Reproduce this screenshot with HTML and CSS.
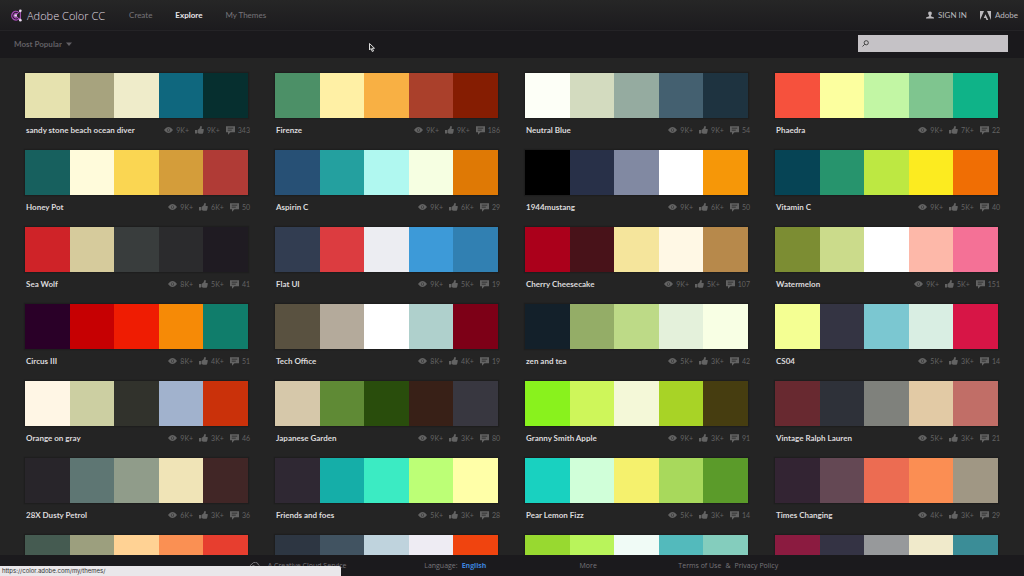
FILE: index.html
```html
<!DOCTYPE html>
<html lang="en">

<head>
    <meta charset="UTF-8">
    <meta name="viewport" content="width=device-width, initial-scale=1.0">
    <title>Explore - Adobe Color CC</title>
    <link rel="stylesheet" href="styles.css">
</head>

<body>
    <svg class="sprite" aria-hidden="true">
        <symbol id="eye" viewBox="0 0 18 12">
            <path fill-rule="evenodd" d="M0 6C3 2 6 0 9 0s6 2 9 6c-3 4-6 6-9 6S3 10 0 6zM9 3a3 3 0 1 0 0 6 3 3 0 0 0 0-6z"/>
            <circle cx="9" cy="6" r="2.3"/>
        </symbol>
        <symbol id="like" viewBox="0 0 18 16">
            <path d="M0 8h4v7H0zM5 8l4-3 2-5c2-.4 3 1 2.600 3L13 6h3.500c1.500 0 1.500 2 .5 2.500 1 .8.8 2-.3 2.300.7 1 .3 2-.7 2.200.5 1.200-.2 2.500-1.500 2.500H9l-4-1.500z"/>
        </symbol>
        <symbol id="comment" viewBox="0 0 18 17">
            <path fill-rule="evenodd" d="M0 0h18v12H9l-5 5v-5H0zM3.500 3v1.600h11V3zM3.500 6.800v1.600h8V6.800z"/>
        </symbol>
    </svg>

    <header class="top">
        <a class="logo" href="#">
            <svg viewBox="0 0 36 38" aria-hidden="true">
                <g fill="none" stroke="#a348b4" stroke-width="4">
                    <path d="M25 8.500A13 13 0 1 0 29 27"/>
                    <path d="M22 14a6.500 6.500 0 1 0 1 10"/>
                </g>
                <path d="M17 19L31 5M17 19l14 14M31 5v28" fill="none" stroke="#b65cc6" stroke-width="3"/>
                <g fill="#eadcf0">
                    <circle cx="31" cy="5" r="4"/>
                    <circle cx="17" cy="19" r="4"/>
                    <circle cx="31" cy="33" r="4"/>
                </g>
            </svg>
            <span>Adobe Color CC</span>
        </a>
        <nav class="menu">
            <a href="#">Create</a>
            <a href="#" class="active">Explore</a>
            <a href="#">My Themes</a>
        </nav>
        <div class="account">
            <a href="#">
                <svg class="user" viewBox="0 0 18 16" aria-hidden="true"><path d="M9 0c3 0 4.500 2 4 5-.3 2-1.200 3-2 4v2l7 2.500V16H0v-2.500L7 11V9C6.200 8 5.300 7 5 5 4.500 2 6 0 9 0z"/></svg>
                <span>SIGN IN</span>
            </a>
            <a href="#">
                <svg class="adobe" viewBox="0 0 22 18" aria-hidden="true"><path d="M0 0h8L0 18zM14 0h8v18zM11 6.500L16.500 18H13l-1.700-3.800H7.500z"/></svg>
                <span>Adobe</span>
            </a>
        </div>
    </header>

    <div class="toolbar">
        <label class="sort">
            <select aria-label="Sort themes">
                <option>Most Popular</option>
                <option>Most Used</option>
                <option>Random</option>
            </select>
            <svg viewBox="0 0 12 8" aria-hidden="true"><path d="M0 1h12L6 8z"/></svg>
        </label>
        <label class="search">
            <svg viewBox="0 0 14 14" aria-hidden="true"><circle cx="8.500" cy="5.500" r="4.200"/><path d="M5.500 8.500L1 13"/></svg>
            <input type="text" aria-label="Search themes">
        </label>
    </div>

    <main id="themes"></main>

    <footer class="bottom">
        <div>
            <svg class="cloud" viewBox="0 0 24 16" aria-hidden="true"><path d="M7 14a5 5 0 0 1-1-9.800A7 7 0 0 1 19 6a4.200 4.200 0 0 1-1 8zM6 9c2-3 5-2 6 0s4 3 6 0"/></svg>
            <a href="#">A Creative Cloud Service</a>
        </div>
        <div>Language: <a href="#" class="lang">English</a></div>
        <div><a href="#">More</a></div>
        <div class="legal"><a href="#">Terms of Use</a><span>&amp;</span><a href="#">Privacy Policy</a></div>
    </footer>

    <div class="status">https://color.adobe.com/my/themes/</div>
    <svg class="cursor" viewBox="0 0 12 18" aria-hidden="true"><path d="M1 1v13l3-3 2.500 6 2.500-1-2.500-5.500H11z"/></svg>

    <script>
        // colors, name, views, likes, comments
        const themes = [
            ['#e6e2af #a7a37e #efecca #0f677e #062f2f', 'sandy stone beach ocean diver', '9K+', '9K+', 343],
            ['#4c9067 #fff0a5 #f8b044 #aa402b #851d02', 'Firenze', '9K+', '9K+', 186],
            ['#fdfff7 #d3dbbf #95aba0 #446070 #1e3340', 'Neutral Blue', '9K+', '9K+', 54],
            ['#f6513d #fcff9f #c2f6a4 #7fc58f #0fb388', 'Phaedra', '9K+', '7K+', 22],
            ['#17605e #fffbdb #fad652 #d49d3a #b03b36', 'Honey Pot', '9K+', '6K+', 50],
            ['#275075 #24a09f #b0f8f0 #f6ffe2 #df7905', 'Aspirin C', '9K+', '6K+', 29],
            ['#000000 #283048 #8189a2 #ffffff #f69708', '1944mustang', '9K+', '6K+', 50],
            ['#064455 #27946d #bde842 #fceb20 #f06e04', 'Vitamin C', '9K+', '5K+', 40],
            ['#cf2328 #d6cb9c #393d3d #2b2b2d #1f1b22', 'Sea Wolf', '8K+', '5K+', 41],
            ['#323d51 #dc3c40 #ecedf2 #3d9ad8 #3180b2', 'Flat UI', '9K+', '5K+', 19],
            ['#ab001b #481219 #f5e59c #fff8e5 #b7894b', 'Cherry Cheesecake', '9K+', '5K+', 107],
            ['#7c8d33 #cbdb8b #ffffff #fdb8a9 #f47196', 'Watermelon', '9K+', '5K+', 151],
            ['#2a0028 #c60002 #ef1c02 #f68a06 #107d6b', 'Circus III', '8K+', '4K+', 51],
            ['#595140 #b4aa9b #ffffff #afd0cc #7d0017', 'Tech Office', '8K+', '4K+', 19],
            ['#13202a #94ad67 #bdda87 #e4f1db #f8ffe4', 'zen and tea', '5K+', '3K+', 42],
            ['#f4ff93 #343443 #7bc7d1 #d9eee3 #d71546', 'CS04', '5K+', '3K+', 14],
            ['#fff6e5 #cccfa2 #31322c #a1b2cd #ca310a', 'Orange on gray', '9K+', '3K+', 46],
            ['#d6c8aa #5f8a35 #294d0c #382017 #383740', 'Japanese Garden', '9K+', '3K+', 80],
            ['#89f21d #cef65a #f4f8d8 #a8d326 #463d10', 'Granny Smith Apple', '9K+', '3K+', 91],
            ['#682930 #2e3139 #7f817c #e2caa5 #c16e67', 'Vintage Ralph Lauren', '5K+', '3K+', 21],
            ['#28252a #5e7673 #909c8a #f0e4b7 #412626', '28X Dusty Petrol', '6K+', '3K+', 36],
            ['#2f2833 #15aea8 #3bebc3 #bcff76 #ffffa8', 'Friends and foes', '5K+', '3K+', 28],
            ['#19d1c0 #d0ffd9 #f5f16d #a8d95c #5b9b2a', 'Pear Lemon Fizz', '5K+', '3K+', 14],
            ['#332433 #644854 #ec6c52 #fb8e53 #a09784', 'Times Changing', '4K+', '3K+', 29],
            ['#455b51 #9c9f7e #ffd294 #fa9053 #e73e2f'],
            ['#2d3642 #415361 #bfd3dd #eeecf3 #f0440f'],
            ['#98d930 #b9f45b #f0fbf6 #53babc #84cdbd'],
            ['#8b1b40 #343344 #97999b #f0eacb #3b8d97']
        ]

        const list = document.getElementById('themes')
        const stat = (icon, label, value) =>
            `<span class="stat"><svg class="${icon}" role="img" aria-label="${label}"><use href="#${icon}"/></svg>${value}</span>`

        themes.forEach(([colors, name, views, likes, comments]) => {
            const theme = document.createElement('article')
            theme.classList.add('theme')
            theme.innerHTML = `
                <div class="swatches">
                    ${colors.split(' ').map(c => `<span style="background:${c}"></span>`).join('')}
                </div>`
            if (name) {
                theme.innerHTML += `
                <div class="info">
                    <h2>${name}</h2>
                    ${stat('eye', 'Views', views)}
                    ${stat('like', 'Likes', likes)}
                    ${stat('comment', 'Comments', comments)}
                </div>`
            }
            list.appendChild(theme)
        })
    </script>
</body>

</html>
```

FILE: styles.css
```css
* {
    box-sizing: border-box;
}
body {
    display: flex;
    flex-direction: column;
    height: 100vh;
    margin: 0;
    overflow: hidden;
    background: #242424;
    color: #77757a;
    font-family: Lato, "Open Sans", sans-serif;
    font-size: 8px;
}
a {
    color: inherit;
    text-decoration: none;
}
svg {
    flex: none;
    fill: currentColor;
}
.sprite {
    position: absolute;
    width: 0;
    height: 0;
}

/* header */
.top {
    display: flex;
    flex: none;
    align-items: center;
    height: 31px;
    padding: 0 6px 0 10px;
    background: linear-gradient(#262626, #1c1b1e);
    border-bottom: 1px solid #242326;
}
.logo {
    display: flex;
    align-items: center;
    gap: 5px;
    color: #e0dee2;
    font-family: "Open Sans", "Noto Sans", sans-serif;
    font-size: 11px;
    font-weight: 300;
}
.logo svg {
    width: 12px;
    height: 13px;
}
.menu {
    display: flex;
    gap: 23px;
    margin-left: 24px;
}
.menu .active {
    color: #e8e6ea;
    font-weight: bold;
}
.account {
    display: flex;
    gap: 13px;
    margin-left: auto;
    color: #bbb9bd;
}
.account a {
    display: flex;
    align-items: center;
    gap: 4px;
}
.user {
    width: 8px;
    height: 8px;
}
.adobe {
    width: 11px;
    height: 9px;
}

/* sort and search */
.toolbar {
    display: flex;
    flex: none;
    align-items: center;
    justify-content: space-between;
    height: 27px;
    padding: 0 16px 2px 14px;
    background: #1a191c;
}
.sort {
    display: flex;
    align-items: center;
    gap: 4px;
    color: #626065;
}
.sort select {
    padding: 0;
    border: 0;
    appearance: none;
    background: none;
    color: inherit;
    font: bold 8px Lato, "Open Sans", sans-serif;
}
.sort svg {
    width: 6px;
    height: 4px;
}
.search {
    display: flex;
    align-items: center;
    width: 150px;
    height: 17px;
    padding: 0 4px;
    background: #c5c2c6;
}
.search svg {
    width: 7px;
    height: 7px;
    fill: none;
    stroke: #444;
    stroke-width: 2;
}
.search input {
    flex: 1;
    min-width: 0;
    border: 0;
    outline: 0;
    background: none;
    font-size: 8px;
}

/* themes */
#themes {
    display: grid;
    flex: 1;
    grid-template-columns: repeat(4, 1fr);
    grid-auto-rows: 77px;
    column-gap: 27px;
    min-height: 0;
    padding: 15px 26px 0 25px;
    overflow-y: auto;
    scrollbar-width: none;
}
.swatches {
    display: flex;
    height: 45px;
    box-shadow: 0 0 1px 1px #1e1e1e;
}
.swatches span {
    flex: 1;
}
.info {
    display: flex;
    align-items: center;
    gap: 6px;
    height: 24px;
    margin-right: -2px;
    padding-left: 1px;
}
.info h2 {
    flex: 1;
    margin: 0;
    color: #dcdadc;
    font-size: 8px;
    white-space: nowrap;
}
.stat {
    display: flex;
    align-items: center;
    gap: 3px;
    color: #636363;
    font-size: 7px;
}
.eye {
    width: 9px;
    height: 6px;
}
.like {
    width: 9px;
    height: 8px;
}
.comment {
    width: 9px;
    height: 9px;
}

/* footer */
.bottom {
    display: grid;
    flex: none;
    grid-template-columns: 177fr 154fr 98fr 98fr;
    align-items: center;
    height: 21px;
    padding: 0 24%;
    background: #1b1a1d;
    font-family: "Open Sans", "Noto Sans", sans-serif;
    font-size: 7px;
    white-space: nowrap;
}
.bottom div {
    display: flex;
    align-items: center;
    gap: 4px;
}
.cloud {
    width: 12px;
    height: 8px;
    margin: 0 3px;
    fill: none;
    stroke: currentColor;
    stroke-width: 2;
}
.lang {
    color: #3b82dc;
    font-weight: bold;
}

/* link address and pointer sit above the page */
.status {
    position: fixed;
    bottom: 0;
    left: 0;
    width: 33.3%;
    height: 10px;
    padding-left: 2px;
    border-radius: 0 2px 0 0;
    background: #e9e7ea;
    color: #333;
    font: 6px/10px Inter, "Liberation Sans", sans-serif;
}
.cursor {
    position: fixed;
    top: 43px;
    left: 369px;
    width: 6px;
    height: 9px;
    fill: #222;
    stroke: #ddd;
    stroke-width: 2;
}
```
